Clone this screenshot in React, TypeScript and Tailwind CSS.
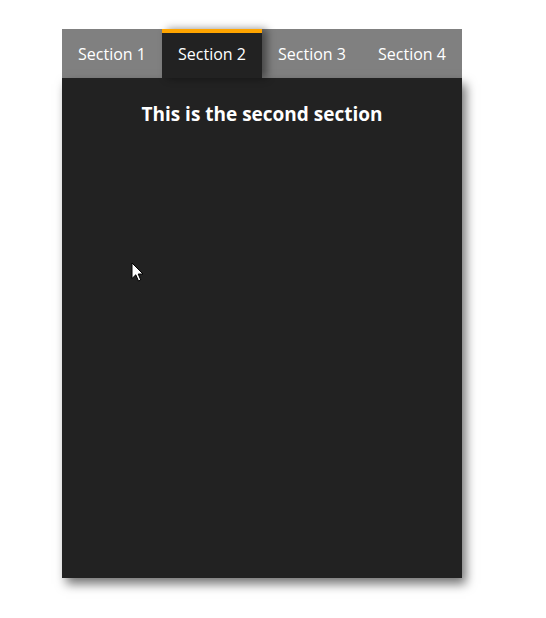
import { useState } from "react";

const TABS = [
  { label: "Section 1", title: "This is the first section" },
  { label: "Section 2", title: "This is the second section" },
  { label: "Section 3", title: "This is the third section" },
  { label: "Section 4", title: "This is the fourth section" },
];

export default function App() {
  const [active, setActive] = useState(1);

  return (
    <div className="relative h-[618px] overflow-hidden bg-white pt-[29px] pl-[62px] font-['Open_Sans',_'Noto_Sans',_sans-serif]">
      <div className="w-[400px]">
        {/* tab bar */}
        <div className="flex h-[49px] bg-[#808080]">
          {TABS.map((t, i) => (
            <button
              key={t.label}
              onClick={() => setActive(i)}
              className={
                i === active
                  ? "relative z-10 flex w-[100px] items-center justify-center border-t-4 border-[#ffa500] bg-[#222222] pb-[3px] text-[16px] text-white shadow-[5px_0_8px_rgba(0,0,0,0.45)]"
                  : "flex w-[100px] items-center justify-center pt-[1px] text-[16px] text-white"
              }
            >
              {t.label}
            </button>
          ))}
        </div>

        {/* panel */}
        <div className="h-[500px] bg-[#222222] pt-[22px] text-center shadow-[4px_6px_10px_rgba(0,0,0,0.55)]">
          <h2 className="text-[19px] leading-7 font-bold text-white">{TABS[active].title}</h2>
        </div>
      </div>

      {/* mouse pointer */}
      <svg className="absolute left-[131px] top-[262px]" width="14" height="21" viewBox="0 0 14 21">
        <path d="M1 1 L1 16.5 L4.8 12.8 L7.5 19 L9.8 18 L7.2 12 L12 12 Z" fill="#fff" stroke="#000" strokeWidth="1" />
      </svg>
    </div>
  );
}
